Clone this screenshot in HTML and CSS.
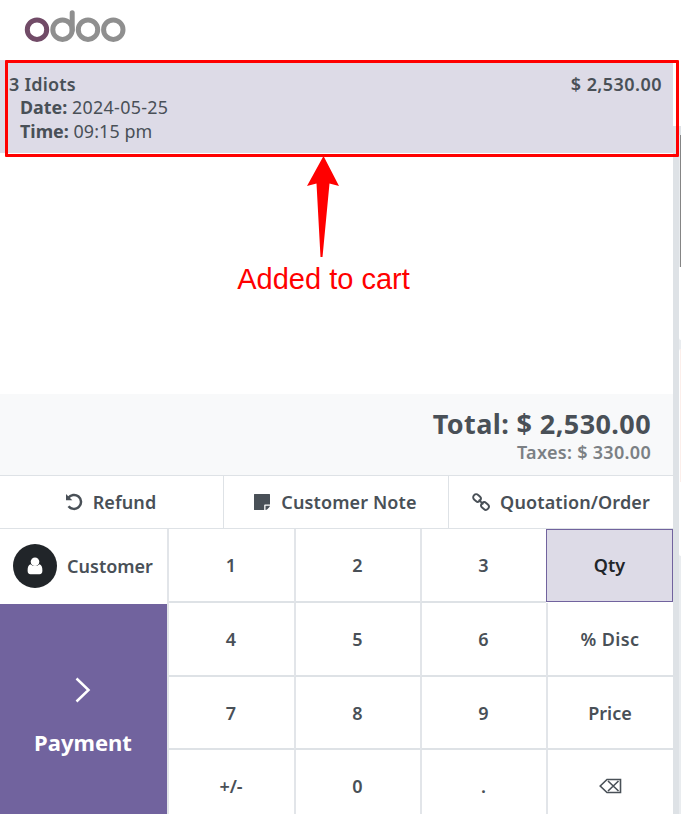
FILE: index.html
```html
<!DOCTYPE html>
<html lang="en">
<head>
<meta charset="utf-8">
<title>Odoo POS</title>
<link rel="stylesheet" href="styles.css">
</head>
<body>
<div class="pos">
  <main class="pane">
    <header class="topbar">
      <svg class="logo" width="104" height="36" viewBox="0 0 104 36" fill="none" stroke="#8f8f8f" stroke-width="5">
        <circle cx="38.5" cy="21.7" r="9.7"/>
        <path d="M48.2 22V4.700" stroke-linecap="round"/>
        <circle cx="64" cy="21.7" r="9.7"/>
        <circle cx="89.300" cy="21.7" r="9.7"/>
        <circle cx="13" cy="21.7" r="9.7" stroke="#714b67"/>
      </svg>
    </header>
    <section class="order">
      <div class="line">
        <div class="line-head"><span class="product">3 Idiots</span><span class="price">$ 2,530.00</span></div>
        <div class="info"><b>Date:</b> <span class="date">2024-05-25</span></div>
        <div class="info"><b>Time:</b> <span class="time">09:15 pm</span></div>
      </div>
    </section>
    <section class="summary">
      <div class="total">Total: $ 2,530.00</div>
      <div class="taxes">Taxes: $ 330.00</div>
    </section>
    <nav class="controls">
      <button class="refund"><svg width="18" height="18" viewBox="0 0 18 18" fill="none" stroke="#495057" stroke-width="2.500"><path d="M3.200 5A7 7 0 1 1 3.500 13.200"/><path d="M1 1v6.300h6.300z" fill="#495057" stroke="none"/></svg><span>Refund</span></button>
      <button class="note"><svg width="18" height="18" viewBox="0 0 18 18" fill="#495057"><path d="M1.500 1h15q.5 0 .5.5V11.500h-5q-.8 0-.8.8V17H1.500q-.5 0-.5-.5v-15Q1 1 1.500 1z"/><path d="M12.500 12.800H17q-.3 1-1 1.800l-1.700 1.600q-.7.600-1.800.8z"/></svg><span>Customer Note</span></button>
      <button class="quote"><svg width="18" height="18" viewBox="0 0 18 18" fill="none" stroke="#495057" stroke-width="1.900"><rect x="1" y="2" width="8" height="6" rx="2.800" transform="rotate(42 5 5)"/><rect x="9" y="10" width="8" height="6" rx="2.800" transform="rotate(42 13 13)"/><path d="M6.700 6.700l4.600 4.600"/></svg><span>Quotation/Order</span></button>
    </nav>
    <section class="pads">
      <div class="actions">
        <button class="customer"><i class="avatar"><svg width="16" height="18" viewBox="0 0 16 18" fill="#fff"><path d="M3.500 7.200Q.6 7.900.6 13.500.6 17.300 3.500 17.300h9q2.900 0 2.900-3.800 0-5.600-2.900-6.300Q8 11 3.500 7.200z"/><circle cx="8" cy="4.700" r="4.300"/></svg></i><span>Customer</span></button>
        <button class="payment"><svg width="18" height="26" viewBox="0 0 18 26" fill="none" stroke="#fff" stroke-width="2.500"><path d="M2.500 1.500L14.500 13 2.500 24.500"/></svg><span>Payment</span></button>
      </div>
      <div class="keys">
        <button>1</button><button>2</button><button>3</button><button class="selected">Qty</button>
        <button>4</button><button>5</button><button>6</button><button class="disc">% Disc</button>
        <button>7</button><button>8</button><button>9</button><button>Price</button>
        <button>+/-</button><button>0</button><button>.</button><button aria-label="Backspace"><svg width="23" height="16" viewBox="0 0 23 16" fill="none" stroke="#495057" stroke-width="1.600"><path d="M1.200 8L8 1.500h13.500v13H8zM9 3l10.500 10M19.500 3L9 13"/></svg></button>
      </div>
    </section>
  </main>
  <aside class="edge">
    <div class="edge-top"></div>
    <div class="card first"></div>
    <div class="card second"><div class="tint"></div></div>
  </aside>
</div>
<div class="highlight"></div>
<div class="callout">
  <svg width="34" height="104" viewBox="0 0 34 104" fill="red"><path d="M16.500 0L32 30 22.500 27.500 15.500 101h-2L9.500 27.500 0 30z"/></svg>
  <span>Added to cart</span>
</div>
</body>
</html>
```

FILE: styles.css
```css
* { box-sizing: border-box; }
body { margin: 0; background: #fff; color: #495057; font: 600 18px/24px "Noto Sans", "Open Sans", sans-serif; overflow: hidden; }
button { font: inherit; color: inherit; background: #fff; border: 0; padding: 0; display: flex; align-items: center; justify-content: center; }
svg { display: block; flex: none; }
.pos { display: flex; height: 814px; }
.pane { width: 673px; display: flex; flex-direction: column; }
.topbar { height: 60px; padding: 8px 0 0 24px; }
.order { height: 334px; }
.line { height: 93px; background: #dddbe7; padding: 12px 11px 0 9px; }
.line-head { display: flex; justify-content: space-between; }
.product { letter-spacing: .2px; }
.price { letter-spacing: .45px; }
.info { height: 24px; padding-left: 11px; font-weight: 400; line-height: 23px; font-size: 17.9px; }
.info b { font-weight: 700; }
.date { letter-spacing: .3px; }
.time { letter-spacing: .1px; }
.summary { height: 82px; background: #f8f9fa; border-bottom: 1px solid #dee2e6; padding: 13px 22px 0 0; text-align: right; }
.total { font-size: 27px; font-weight: 700; line-height: 33px; letter-spacing: .4px; }
.taxes { color: #7b8084; line-height: 24px; letter-spacing: .3px; }
.controls { display: grid; grid-template-columns: 223px 225px 225px; height: 52px; }
.controls button { gap: 10px; letter-spacing: .12px; padding-right: 2px; }
.controls .quote { padding-right: 0; }
.controls button + button { border-left: 1px solid #dee2e6; }
.pads { display: flex; height: 286px; }
.actions { width: 167px; display: flex; flex-direction: column; }
.customer { height: 76px; border-top: 1px solid #dee2e6; gap: 10px; padding: 0 1px 2px 0; }
.avatar { width: 44px; height: 44px; border-radius: 50%; background: #212529; display: flex; align-items: center; justify-content: center; }
.payment { flex: 1; background: #71639e; color: #fff; flex-direction: column; gap: 24px; padding: 16px 1px 0 0; font-size: 22px; line-height: 30px; font-weight: 700; }
.keys { width: 506px; display: grid; grid-template-columns: 127px 126px 126px 127px; grid-template-rows: 74px 74px 73px 74px; overflow: hidden; border-top: 1px solid #dee2e6; }
.keys button { border-left: 2px solid #e2e5e9; border-bottom: 2px solid #dee2e6; padding-right: 1px; }
.keys .selected { background: #dddbe7; border: 1px solid #71639e; color: #212529; padding: 0 0 1px; height: 73px; }
.keys .disc { letter-spacing: .4px; }
.edge { width: 8px; background: linear-gradient(90deg, #dee2e6 6px, #e9ecef 6px); }
.edge-top { height: 267px; background: linear-gradient(#fff 126px, #dee2e6 126px, #dee2e6 135px, transparent 135px), linear-gradient(90deg, transparent 7px, #858585 7px); }
.card { margin-left: 6px; background: #fff; }
.first { height: 73px; border-bottom-left-radius: 2px; }
.second { margin-top: 9px; height: 207px; border-radius: 2px 0 0 2px; padding-left: 1px; }
.tint { height: 133px; background: #fceeea; }
.highlight { position: absolute; left: 5px; top: 60px; width: 674px; height: 97px; border: 3px solid red; border-radius: 1px; }
.callout { position: absolute; left: 236px; top: 156px; width: 175px; display: flex; flex-direction: column; align-items: center; color: red; font: 29px/38px "Liberation Sans", Arial, sans-serif; white-space: nowrap; }
```
